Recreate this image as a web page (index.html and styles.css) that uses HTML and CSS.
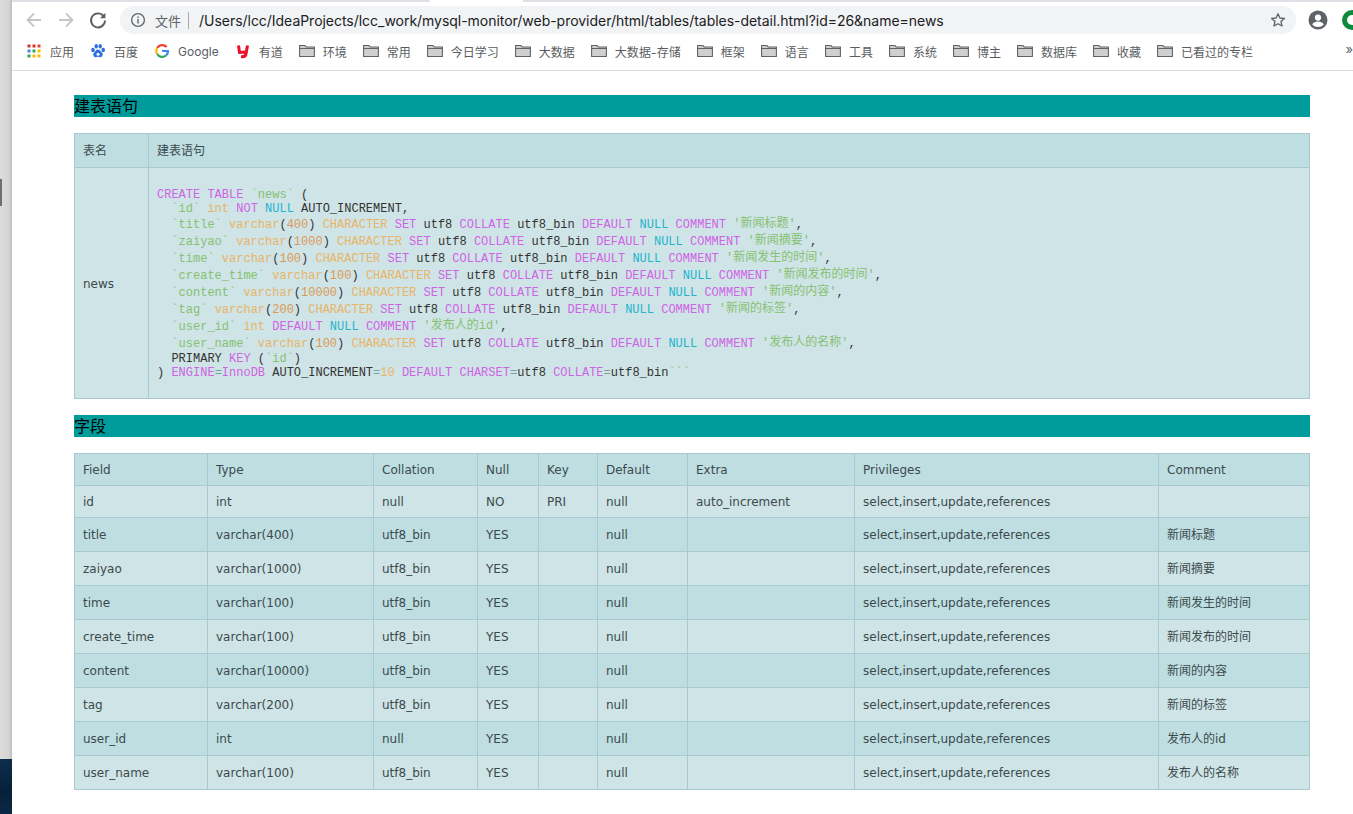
FILE: index.html
```html
<!DOCTYPE html>
<html lang="zh-CN">
<head>
<meta charset="utf-8">
<title>tables-detail</title>
<link rel="stylesheet" href="styles.css">
</head>
<body>
<aside class="desktop">
  <div class="behind"><div class="thumb"></div></div>
  <div class="wallpaper"></div>
</aside>
<div class="window">
  <div class="tabstrip"><div class="seg-a"></div><div class="seg-b"></div><div class="seg-c"></div></div>
  <div class="toolbar">
    <svg class="tool" viewBox="0 0 20 20"><path d="M17 10H4M10 3.500 3.500 10l6.500 6.500" fill="none" stroke="#c4c7ca" stroke-width="1.800"/></svg>
    <svg class="tool" viewBox="0 0 20 20"><path d="M3 10h13M10 3.500l6.500 6.500-6.500 6.500" fill="none" stroke="#c4c7ca" stroke-width="1.800"/></svg>
    <svg class="tool" viewBox="0 0 20 20"><path d="M15.600 6.200A7 7 0 1 0 17 10.500" fill="none" stroke="#5a5d61" stroke-width="1.900"/><path d="M17.400 2.800v5.400H12z" fill="#5a5d61"/></svg>
    <div class="omnibox">
      <svg class="info" viewBox="0 0 16 16"><circle cx="8" cy="8" r="6.400" fill="none" stroke="#5f6368" stroke-width="1.300"/><path d="M8 7v4.400M8 4.400v1.500" stroke="#5f6368" stroke-width="1.400"/></svg>
      <span class="scheme">文件</span>
      <span class="sep"></span>
      <span class="url">/Users/lcc/IdeaProjects/lcc_work/mysql-monitor/web-provider/html/tables/tables-detail.html?id=26&amp;name=news</span>
      <svg class="star" viewBox="0 0 16 16"><path d="M8 1.800l1.900 4.200 4.500.5-3.400 3 1 4.500L8 11.700 4 14l1-4.500-3.400-3 4.500-.5z" fill="none" stroke="#5f6368" stroke-width="1.300" stroke-linejoin="round"/></svg>
    </div>
    <svg class="avatar" viewBox="0 0 20 20"><circle cx="10" cy="10" r="9.500" fill="#5f6368"/><circle cx="10" cy="7.600" r="3.100" fill="#fff"/><path d="M4.200 14.400c1.200-2 3.400-2.900 5.800-2.900s4.600.9 5.800 2.900A7.500 7.500 0 0 1 10 17a7.500 7.500 0 0 1-5.800-2.600z" fill="#fff"/></svg>
    <div class="ext"></div>
  </div>
  <nav class="bookmarks">
    <a class="bm"><svg class="ico" viewBox="0 0 16 16"><g><rect x="1.500" y="1.500" width="3" height="3" fill="#d93025"/><rect x="6.500" y="1.500" width="3" height="3" fill="#d93025"/><rect x="11.500" y="1.500" width="3" height="3" fill="#ea4335"/><rect x="1.500" y="6.500" width="3" height="3" fill="#4285f4"/><rect x="6.500" y="6.500" width="3" height="3" fill="#34a853"/><rect x="11.500" y="6.500" width="3" height="3" fill="#fbbc05"/><rect x="1.500" y="11.500" width="3" height="3" fill="#34a853"/><rect x="6.500" y="11.500" width="3" height="3" fill="#fbbc05"/><rect x="11.500" y="11.500" width="3" height="3" fill="#fbbc05"/></g></svg>应用</a>
    <a class="bm"><svg class="ico" viewBox="0 0 16 16"><g fill="#2f6fe0"><ellipse cx="3" cy="7" rx="1.800" ry="2.300"/><ellipse cx="6.200" cy="3.300" rx="1.700" ry="2.200"/><ellipse cx="10.200" cy="3.300" rx="1.700" ry="2.200"/><ellipse cx="13.200" cy="7" rx="1.800" ry="2.300"/><path d="M8 6.500c-2 0-2.600 2-4 3.300-1.500 1.500-.6 4.700 2 4.400 1-.1 1.300-.4 2-.4s1.100.3 2.100.4c2.600.2 3.400-3 1.900-4.400C10.600 8.500 10 6.500 8 6.500z"/></g><circle cx="8" cy="11.300" r="1.500" fill="#fff"/></svg>百度</a>
    <a class="bm"><svg class="ico" viewBox="0 0 16 16" fill="none" stroke-width="2.200"><path d="M12.700 4A6 6 0 0 0 3.100 5" stroke="#ea4335"/><path d="M3.100 5a6 6 0 0 0 0 6" stroke="#fbbc05"/><path d="M3.100 11a6 6 0 0 0 9 1.500" stroke="#34a853"/><path d="M12.100 12.500A6 6 0 0 0 14 8H8" stroke="#4285f4"/></svg>Google</a>
    <a class="bm"><svg class="ico" viewBox="0 0 16 16"><path d="M3.500 2.500 4.500 9.500 10 9M12.500 2.500 11 11c-.3 2-2 3-5 2.600" fill="none" stroke="#e8102a" stroke-width="3"/></svg>有道</a>
    <a class="bm"><svg class="ico"><use href="#folder"/></svg>环境</a>
    <a class="bm"><svg class="ico"><use href="#folder"/></svg>常用</a>
    <a class="bm"><svg class="ico"><use href="#folder"/></svg>今日学习</a>
    <a class="bm"><svg class="ico"><use href="#folder"/></svg>大数据</a>
    <a class="bm"><svg class="ico"><use href="#folder"/></svg><span class="wide">大数据-存储</span></a>
    <a class="bm"><svg class="ico"><use href="#folder"/></svg>框架</a>
    <a class="bm"><svg class="ico"><use href="#folder"/></svg>语言</a>
    <a class="bm"><svg class="ico"><use href="#folder"/></svg>工具</a>
    <a class="bm"><svg class="ico"><use href="#folder"/></svg>系统</a>
    <a class="bm"><svg class="ico"><use href="#folder"/></svg>博主</a>
    <a class="bm"><svg class="ico"><use href="#folder"/></svg>数据库</a>
    <a class="bm"><svg class="ico"><use href="#folder"/></svg>收藏</a>
    <a class="bm"><svg class="ico"><use href="#folder"/></svg>已看过的专栏</a>
    <span class="more">»</span>
    <svg class="defs" width="0" height="0"><symbol id="folder" viewBox="0 0 16 16"><path d="M.6 2.500h5.200l1.500 1.500h8.100v9.500H.6z" fill="#d0d0d0" stroke="#5f6368" stroke-width="1.100"/><path d="M.6 5.500h14.800" stroke="#5f6368" stroke-width="1"/></symbol></svg>
  </nav>
  <main class="page">
    <h2 class="bar">建表语句</h2>
    <table class="grid ddl">
      <colgroup><col class="c-name"><col></colgroup>
      <tr class="odd"><td class="zh">表名</td><td class="zh">建表语句</td></tr>
      <tr class="even"><td>news</td><td class="codecell"><pre class="code"><i class="k">CREATE</i> <i class="k">TABLE</i> <i class="s">`news`</i> (
  <i class="s">`id`</i> <i class="b">int</i> <i class="k">NOT</i> <i class="l">NULL</i> AUTO_INCREMENT,
  <i class="s">`title`</i> <i class="b">varchar</i>(<i class="n">400</i>) <i class="b">CHARACTER</i> <i class="k">SET</i> utf8 <i class="k">COLLATE</i> utf8_bin <i class="k">DEFAULT</i> <i class="l">NULL</i> <i class="k">COMMENT</i> <i class="s cn">'新闻标题'</i>,
  <i class="s">`zaiyao`</i> <i class="b">varchar</i>(<i class="n">1000</i>) <i class="b">CHARACTER</i> <i class="k">SET</i> utf8 <i class="k">COLLATE</i> utf8_bin <i class="k">DEFAULT</i> <i class="l">NULL</i> <i class="k">COMMENT</i> <i class="s cn">'新闻摘要'</i>,
  <i class="s">`time`</i> <i class="b">varchar</i>(<i class="n">100</i>) <i class="b">CHARACTER</i> <i class="k">SET</i> utf8 <i class="k">COLLATE</i> utf8_bin <i class="k">DEFAULT</i> <i class="l">NULL</i> <i class="k">COMMENT</i> <i class="s cn">'新闻发生的时间'</i>,
  <i class="s">`create_time`</i> <i class="b">varchar</i>(<i class="n">100</i>) <i class="b">CHARACTER</i> <i class="k">SET</i> utf8 <i class="k">COLLATE</i> utf8_bin <i class="k">DEFAULT</i> <i class="l">NULL</i> <i class="k">COMMENT</i> <i class="s cn">'新闻发布的时间'</i>,
  <i class="s">`content`</i> <i class="b">varchar</i>(<i class="n">10000</i>) <i class="b">CHARACTER</i> <i class="k">SET</i> utf8 <i class="k">COLLATE</i> utf8_bin <i class="k">DEFAULT</i> <i class="l">NULL</i> <i class="k">COMMENT</i> <i class="s cn">'新闻的内容'</i>,
  <i class="s">`tag`</i> <i class="b">varchar</i>(<i class="n">200</i>) <i class="b">CHARACTER</i> <i class="k">SET</i> utf8 <i class="k">COLLATE</i> utf8_bin <i class="k">DEFAULT</i> <i class="l">NULL</i> <i class="k">COMMENT</i> <i class="s cn">'新闻的标签'</i>,
  <i class="s">`user_id`</i> <i class="b">int</i> <i class="k">DEFAULT</i> <i class="l">NULL</i> <i class="k">COMMENT</i> <i class="s cn">'发布人的id'</i>,
  <i class="s">`user_name`</i> <i class="b">varchar</i>(<i class="n">100</i>) <i class="b">CHARACTER</i> <i class="k">SET</i> utf8 <i class="k">COLLATE</i> utf8_bin <i class="k">DEFAULT</i> <i class="l">NULL</i> <i class="k">COMMENT</i> <i class="s cn">'发布人的名称'</i>,
  PRIMARY <i class="k">KEY</i> (<i class="s">`id`</i>)
) <i class="k">ENGINE</i><i class="o">=</i><i class="k">InnoDB</i> AUTO_INCREMENT<i class="o">=</i><i class="b">10</i> <i class="k">DEFAULT</i> <i class="k">CHARSET</i><i class="o">=</i>utf8 <i class="k">COLLATE</i><i class="o">=</i>utf8_bin<i class="s">```</i></pre></td></tr>
    </table>
    <h2 class="bar">字段</h2>
    <table class="grid fields">
      <colgroup><col class="c1"><col class="c2"><col class="c3"><col class="c4"><col class="c5"><col class="c6"><col class="c7"><col class="c8"><col></colgroup>
      <tr class="odd"><td>Field</td><td>Type</td><td>Collation</td><td>Null</td><td>Key</td><td>Default</td><td>Extra</td><td>Privileges</td><td>Comment</td></tr>
      <tr class="even"><td>id</td><td>int</td><td>null</td><td>NO</td><td>PRI</td><td>null</td><td>auto_increment</td><td>select,insert,update,references</td><td></td></tr>
      <tr class="odd"><td>title</td><td>varchar(400)</td><td>utf8_bin</td><td>YES</td><td></td><td>null</td><td></td><td>select,insert,update,references</td><td class="zh">新闻标题</td></tr>
      <tr class="even"><td>zaiyao</td><td>varchar(1000)</td><td>utf8_bin</td><td>YES</td><td></td><td>null</td><td></td><td>select,insert,update,references</td><td class="zh">新闻摘要</td></tr>
      <tr class="odd"><td>time</td><td>varchar(100)</td><td>utf8_bin</td><td>YES</td><td></td><td>null</td><td></td><td>select,insert,update,references</td><td class="zh">新闻发生的时间</td></tr>
      <tr class="even"><td>create_time</td><td>varchar(100)</td><td>utf8_bin</td><td>YES</td><td></td><td>null</td><td></td><td>select,insert,update,references</td><td class="zh">新闻发布的时间</td></tr>
      <tr class="odd"><td>content</td><td>varchar(10000)</td><td>utf8_bin</td><td>YES</td><td></td><td>null</td><td></td><td>select,insert,update,references</td><td class="zh">新闻的内容</td></tr>
      <tr class="even"><td>tag</td><td>varchar(200)</td><td>utf8_bin</td><td>YES</td><td></td><td>null</td><td></td><td>select,insert,update,references</td><td class="zh">新闻的标签</td></tr>
      <tr class="odd"><td>user_id</td><td>int</td><td>null</td><td>YES</td><td></td><td>null</td><td></td><td>select,insert,update,references</td><td class="zh">发布人的id</td></tr>
      <tr class="even"><td>user_name</td><td>varchar(100)</td><td>utf8_bin</td><td>YES</td><td></td><td>null</td><td></td><td>select,insert,update,references</td><td class="zh">发布人的名称</td></tr>
    </table>
  </main>
</div>
</body>
</html>
```
FILE: styles.css
```css
* { box-sizing: border-box; }
html, body { margin: 0; height: 814px; overflow: hidden; background: #fff; }
body { display: flex; font-family: "Inter", "Noto Sans CJK SC", sans-serif; }

.desktop { width: 12px; flex: none; display: flex; flex-direction: column; }
.behind { flex: 1; padding-top: 179px; background: linear-gradient(90deg, #dcdcdc 0, #d4d4d4 9px, #bcbcbc 12px); }
.thumb { width: 2px; height: 27px; background: #6e6e6e; }
.wallpaper { height: 55px; background: linear-gradient(160deg, #0d2f4c, #07203a 60%, #0b2a45); }

.window { flex: 1; min-width: 0; display: flex; flex-direction: column; }
.tabstrip { height: 2px; display: flex; flex: none; }
.seg-a { width: 418px; background: #dee1e6; border-bottom-right-radius: 2px; }
.seg-b { width: 93px; background: #fff; }
.seg-c { flex: 1; background: #dee1e6; }

.toolbar { height: 33px; flex: none; display: flex; align-items: center; padding: 3px 0 0 12px; gap: 12px; overflow: hidden; }
.tool { width: 20px; height: 20px; flex: none; }
.omnibox { width: 1176px; height: 28px; flex: none; border-radius: 14px; background: #f1f3f4; display: flex; align-items: center; padding: 0 10px; }
.info { width: 16px; height: 16px; flex: none; }
.scheme { margin-left: 9px; font-size: 13px; color: #5f6368; }
.sep { width: 1px; height: 17px; background: #a8abae; margin: 0 10px 0 7px; }
.url { flex: 1; font-size: 14px; color: #202124; white-space: nowrap; letter-spacing: -.03px; }
.star { width: 16px; height: 16px; flex: none; }
.avatar { width: 20px; height: 20px; flex: none; }
.ext { width: 20px; height: 20px; flex: none; border-radius: 50%; border: 5px solid #0f8a3c; background: #fff; margin-left: 2px; }

.bookmarks { height: 36px; flex: none; display: flex; align-items: center; padding: 0 0 3px 14px; gap: 16px; border-bottom: 1px solid #d9dadb; position: relative; white-space: nowrap; }
.bm { display: flex; align-items: center; gap: 8px; font-size: 12px; color: #5a5d61; }
.ico { width: 16px; height: 16px; flex: none; }
.wide { letter-spacing: .1px; }
.defs { position: absolute; }
.more { position: absolute; right: 0; top: 6px; font-size: 13px; color: #5f6368; }

.page { flex: 1; padding: 24px 43px 0 62px; display: flex; flex-direction: column; gap: 16px; }
.bar { margin: 0; height: 22px; line-height: 22px; font-size: 16px; font-weight: 400; background: #009c9c; color: #000; }

.grid { width: 1236px; table-layout: fixed; border-collapse: collapse; font-family: "DejaVu Sans", "Noto Sans CJK SC", sans-serif; font-size: 12px; line-height: 15px; color: #3c4a4c; }
.grid td { border: 1px solid #a6cacd; padding: 9px 8px 7px; white-space: nowrap; }
.grid .zh { line-height: 17px; }
.odd td { background: #bedee2; }
.even td { background: #cfe4e6; }
.c-name { width: 74px; }
.c1 { width: 133px; } .c2 { width: 166px; } .c3 { width: 104px; } .c4 { width: 61px; }
.c5 { width: 59px; } .c6 { width: 90px; } .c7 { width: 167px; } .c8 { width: 304px; }

.code { margin: 11px 0 11px; font-family: "Liberation Mono", "Noto Sans CJK SC", monospace; font-size: 12px; line-height: 14px; color: #333; }
.code i { font-style: normal; }
.code .cn { line-height: 17px; vertical-align: 1px; }
.k { color: #cf63e6; }
.l { color: #1fb4cc; }
.s { color: #86c172; }
.b { color: #e8b566; }
.n { color: #dd9a57; }
.o { color: #7aa0a0; }
```
